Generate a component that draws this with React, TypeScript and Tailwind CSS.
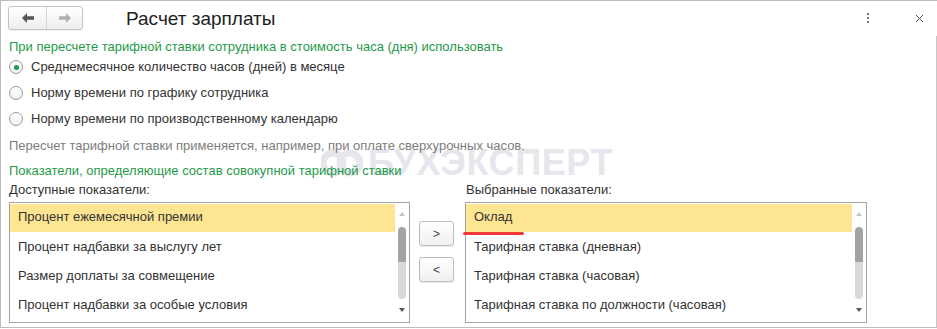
import React from 'react';

const font = { fontFamily: '"Liberation Sans", Arial, sans-serif' };

const available = [
  'Процент ежемесячной премии',
  'Процент надбавки за выслугу лет',
  'Размер доплаты за совмещение',
  'Процент надбавки за особые условия',
];

const selected = [
  'Оклад',
  'Тарифная ставка (дневная)',
  'Тарифная ставка (часовая)',
  'Тарифная ставка по должности (часовая)',
];

const Arrow: React.FC<{ dir: 'left' | 'right'; color: string }> = ({ dir, color }) => (
  <svg width="12" height="10" viewBox="0 0 12 10" className={dir === 'right' ? 'scale-x-[-1]' : ''}>
    <path d="M0 5 L5 0 L5 3.2 L12 3.2 L12 6.8 L5 6.8 L5 10 Z" fill={color} />
  </svg>
);

const Radio: React.FC<{ checked?: boolean; label: string }> = ({ checked, label }) => (
  <div className="h-[26px] flex items-center">
    <div className="w-[14px] h-[14px] rounded-full border border-[#9a9a9a] bg-gradient-to-b from-white to-[#f0f0f0] flex items-center justify-center">
      {checked && <div className="w-[5px] h-[5px] rounded-full bg-[#1f9a4a]" />}
    </div>
    <span className="ml-[8px] text-[13px] text-[#333]">{label}</span>
  </div>
);

const Scrollbar: React.FC = () => (
  <div className="w-[14px] flex flex-col items-center pt-[8px]">
    <div className="w-0 h-0 border-l-[3px] border-r-[3px] border-b-[4px] border-l-transparent border-r-transparent border-b-[#c4c4c4]" />
    <div className="mt-[11px] w-[8px] h-[35px] rounded-t-full bg-[#a3a3a3]" />
    <div className="w-[8px] h-[37px] rounded-b-full bg-[#d9d9d9]" />
    <div className="mt-[9px] w-0 h-0 border-l-[3px] border-r-[3px] border-t-[4px] border-l-transparent border-r-transparent border-t-[#555]" />
  </div>
);

const ListBox: React.FC<{ items: string[]; width: string; mark?: boolean }> = ({ items, width, mark }) => (
  <div className={`relative ${width} h-[121px] border border-[#a5a5a5] bg-white flex pt-[1px]`}>
    <div className="flex-1 flex flex-col">
      {items.map((it, i) => (
        <div
          key={it}
          className={`flex items-center pl-[8px] pb-[2px] text-[13px] text-[#333] ${i === 0 ? 'bg-[#fde592] h-[28px] mb-[1px]' : 'h-[29px]'}`}
        >
          {it}
        </div>
      ))}
    </div>
    <Scrollbar />
    {mark && <div className="absolute left-[-3px] top-[29px] w-[61px] h-[3px] rounded-full bg-[#f03a3a]" />}
  </div>
);

const MoveButton: React.FC<{ label: string }> = ({ label }) => (
  <button className="w-[35px] h-[25px] rounded-[3px] border border-[#bdbdbd] bg-gradient-to-b from-white to-[#f0f0f0] shadow-[0_1px_1px_rgba(0,0,0,0.08)] text-[12px] text-[#444] flex items-center justify-center">
    {label}
  </button>
);

export default function App() {
  return (
    <div style={font} className="relative w-[937px] h-[329px] bg-white overflow-hidden">
      <div className="relative w-full h-[328px] border-l border-t border-b border-[#bdbdbd] flex flex-col">
        {/* watermark */}
        <div className="absolute left-[320px] top-[145px] h-[34px] flex items-center gap-[5px] select-none">
          <svg width="42" height="32" viewBox="0 0 42 32">
            <circle cx="12" cy="16" r="10" fill="none" stroke="#e6e6ec" strokeWidth="7" />
            <circle cx="29" cy="16" r="10" fill="none" stroke="#e6e6ec" strokeWidth="7" />
          </svg>
          <span className="text-[36px] font-bold text-[#e6e6ec] tracking-[0.6px] leading-[34px]">БУХЭКСПЕРТ</span>
        </div>

        {/* header */}
        <div className="relative h-[35px] flex items-start">
          <div className="ml-[7px] mt-[5px] flex h-[24px] w-[75px] rounded-[3px] border border-[#c2c2c2] bg-gradient-to-b from-white to-[#eeeeee] shadow-[0_1px_1px_rgba(0,0,0,0.06)]">
            <div className="w-[38px] flex items-center justify-center border-r border-[#d4d4d4]">
              <Arrow dir="left" color="#555" />
            </div>
            <div className="flex-1 flex items-center justify-center">
              <Arrow dir="right" color="#b0b0b0" />
            </div>
          </div>
          <div className="ml-[43px] mt-[7px] text-[19px] text-[#222] leading-[22px]">Расчет зарплаты</div>
          <div className="ml-auto mt-[12px] mr-[46px] flex flex-col gap-[2px]">
            <div className="w-[2px] h-[2px] bg-[#777]" />
            <div className="w-[2px] h-[2px] bg-[#777]" />
            <div className="w-[2px] h-[2px] bg-[#777]" />
          </div>
          <svg className="mt-[13px] mr-[13px]" width="9" height="9" viewBox="0 0 9 9">
            <path d="M1 1 L8 8 M8 1 L1 8" stroke="#555" strokeWidth="1" />
          </svg>
        </div>

        {/* body */}
        <div className="relative flex-1 border-r border-[#c8c8c8] pl-[8px]">
          <div className="h-[18px] pt-[4px] leading-[14px] text-[13px] text-[#1f9a4a]">
            При пересчете тарифной ставки сотрудника в стоимость часа (дня) использовать
          </div>
          <Radio checked label="Среднемесячное количество часов (дней) в месяце" />
          <Radio label="Норму времени по графику сотрудника" />
          <Radio label="Норму времени по производственному календарю" />
          <div className="h-[27px] flex items-center text-[13px] text-[#7d7d7d]">
            Пересчет тарифной ставки применяется, например, при оплате сверхурочных часов.
          </div>
          <div className="h-[24px] flex items-center text-[13px] text-[#1f9a4a]">
            Показатели, определяющие состав совокупной тарифной ставки
          </div>
          <div className="h-[14px] leading-[14px] flex text-[13px] text-[#333]">
            <div className="w-[457px]">Доступные показатели:</div>
            <div>Выбранные показатели:</div>
          </div>
          <div className="mt-[5px] flex items-start">
            <ListBox items={available} width="w-[401px]" />
            <div className="ml-[9px] mt-[19px] flex flex-col gap-[11px]">
              <MoveButton label=">" />
              <MoveButton label="<" />
            </div>
            <div className="ml-[11px]">
              <ListBox items={selected} width="w-[402px]" mark />
            </div>
          </div>
        </div>
      </div>
    </div>
  );
}
